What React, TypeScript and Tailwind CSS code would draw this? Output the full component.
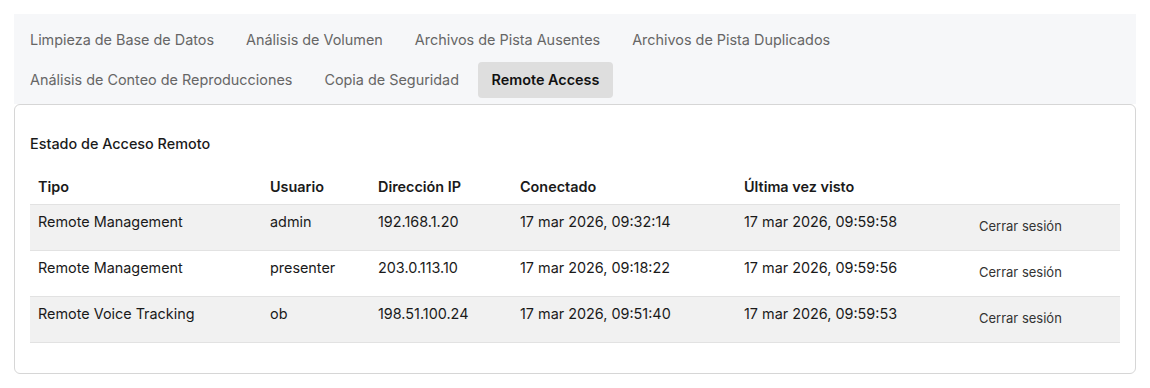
import React from "react";

const tabRows = [
  [
    "Limpieza de Base de Datos",
    "Análisis de Volumen",
    "Archivos de Pista Ausentes",
    "Archivos de Pista Duplicados",
  ],
  ["Análisis de Conteo de Reproducciones", "Copia de Seguridad", "Remote Access"],
];

const rows = [
  ["Remote Management", "admin", "192.168.1.20", "17 mar 2026, 09:32:14", "17 mar 2026, 09:59:58"],
  ["Remote Management", "presenter", "203.0.113.10", "17 mar 2026, 09:18:22", "17 mar 2026, 09:59:56"],
  ["Remote Voice Tracking", "ob", "198.51.100.24", "17 mar 2026, 09:51:40", "17 mar 2026, 09:59:53"],
];

export default function App() {
  return (
    <div
      className="w-[1150px] h-[388px] bg-white p-[14px] text-[#1a1a1a]"
      style={{ fontFamily: "Inter, 'Noto Sans', sans-serif" }}
    >
      <div className="bg-[#f6f7f9] pt-[8px] pb-[6px] flex flex-col gap-1">
        {tabRows.map((row, ri) => (
          <div key={ri} className="flex">
            {row.map((t) => {
              const active = t === "Remote Access";
              return (
                <button
                  key={t}
                  className={
                    active
                      ? "h-9 ml-[3px] px-[13.5px] rounded-[4px] bg-[#dedede] text-[14.4px] font-semibold text-[#111]"
                      : "h-9 px-4 rounded-[4px] text-[14.4px] text-[#666]"
                  }
                >
                  {t}
                </button>
              );
            })}
          </div>
        ))}
      </div>
      <div className="border border-[#d6d6d6] rounded-md px-[15px] pt-[29px] pb-[30px]">
        <div className="text-[14.4px] leading-[20px] font-medium text-[#1a1a1a] mb-[12px]">
          Estado de Acceso Remoto
        </div>
        <table className="w-full table-fixed border-collapse text-[14.4px]">
          <colgroup>
            <col className="w-[232px]" />
            <col className="w-[108px]" />
            <col className="w-[142px]" />
            <col className="w-[224px]" />
            <col className="w-[235px]" />
            <col />
          </colgroup>
          <thead>
            <tr className="border-b border-[#e2e2e2]">
              {["Tipo", "Usuario", "Dirección IP", "Conectado", "Última vez visto", ""].map((h, i) => (
                <th key={i} className="text-left font-semibold leading-[22px] px-2 pt-[10px] pb-[6px]">
                  {h}
                </th>
              ))}
            </tr>
          </thead>
          <tbody>
            {rows.map((r, ri) => (
              <tr key={ri} className={(ri % 2 === 0 ? "bg-[#f1f1f1] " : "bg-white ") + "border-b border-[#e2e2e2]"}>
                {r.map((c, ci) => (
                  <td key={ci} className="align-top px-2 pt-[6px] pb-[7px] leading-[22px]">
                    {c}
                  </td>
                ))}
                <td className="align-top px-2 pt-[6px] pb-[7px]">
                  <button className="h-8 text-[13px] text-[#333]">Cerrar sesión</button>
                </td>
              </tr>
            ))}
          </tbody>
        </table>
      </div>
    </div>
  );
}
